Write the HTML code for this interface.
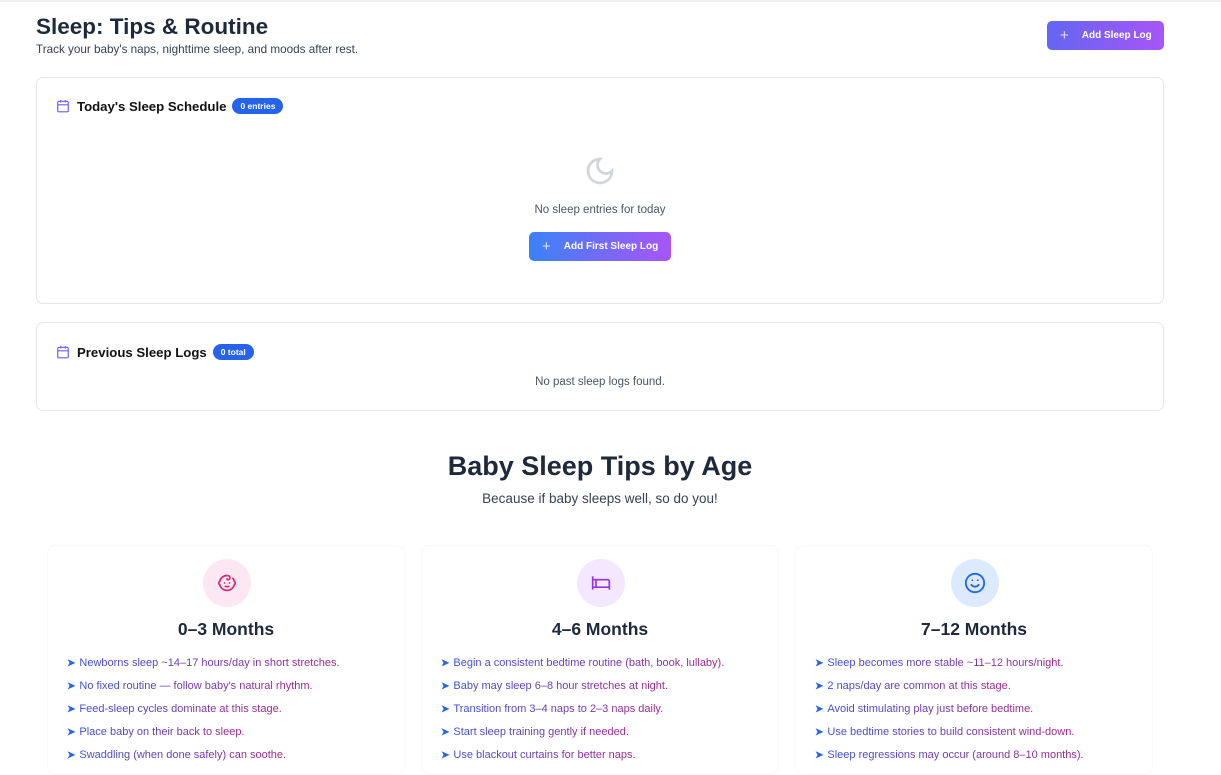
<!DOCTYPE html>
<html><head><meta charset="utf-8"><style>
*{box-sizing:border-box;margin:0;padding:0}
body{width:1221px;height:762px;overflow:hidden;background:#fff;font-family:"Liberation Sans",Arial,sans-serif;color:#1f2937;position:relative}
.topline{position:absolute;left:0;top:0;width:1221px;height:2px;background:#f3eef2}
h1{position:absolute;left:36px;top:14px;font-size:22.5px;font-weight:700;color:#1e293b}
.sub{position:absolute;left:36px;top:43px;font-size:11.7px;color:#374151}
.btn{position:absolute;color:#fff;font-size:10px;font-weight:700;border-radius:5px;display:flex;align-items:center;background:linear-gradient(90deg,#6366f1,#a855f7)}
.card{position:absolute;left:36px;width:1128px;border:1px solid #e5e7eb;border-radius:7px;background:#fff}
.ct{position:absolute;left:19px;display:flex;align-items:center;font-size:13.2px;font-weight:700;color:#111}
.ct svg{margin-right:7px}
.badge{margin-left:6px;background:#2563eb;color:#fff;font-size:8.5px;font-weight:700;border-radius:9px;padding:3px 8px}
.muted{position:absolute;width:100%;text-align:center;font-size:11.5px;color:#4b5563}
.h2{position:absolute;top:451px;left:0;width:1200px;text-align:center;font-size:27px;font-weight:700;color:#1e293b}
.h2s{position:absolute;top:491px;left:0;width:1200px;text-align:center;font-size:13.5px;color:#374151}
.col{position:absolute;top:545px;width:358px;height:230px;border:1px solid #f8f8fa;border-radius:8px}
.circ{position:absolute;top:13px;left:155px;width:48px;height:48px;border-radius:50%;display:flex;align-items:center;justify-content:center}
.ch{position:absolute;top:73px;width:100%;text-align:center;font-size:17.5px;font-weight:700;color:#1e293b}
ul{position:absolute;top:111px;left:19px;list-style:none}
li{font-size:11px;height:23px;display:flex;align-items:flex-start}
li b{color:#2563eb;font-size:10px;margin-right:4px;line-height:13px}
li span{line-height:13px;background:linear-gradient(90deg,#3b4fd8,#a3248a);-webkit-background-clip:text;background-clip:text;color:transparent}
</style></head><body>
<div class="topline"></div>
<h1>Sleep: Tips &amp; Routine</h1>
<div class="sub">Track your baby's naps, nighttime sleep, and moods after rest.</div>
<div class="btn" style="left:1047px;top:21px;width:117px;height:29px;padding-left:13px"><span style="font-size:15px;font-weight:400;margin-right:13px;opacity:.8">+</span>Add Sleep Log</div>

<div class="card" style="top:77px;height:227px">
 <div class="ct" style="top:20px"><svg width="14" height="14" viewBox="0 0 24 24" fill="none" stroke="#6d5cf0" stroke-width="2"><rect x="3" y="4" width="18" height="18" rx="2"/><path d="M16 2v4M8 2v4M3 10h18"/></svg>Today's Sleep Schedule<span class="badge">0 entries</span></div>
 <svg style="position:absolute;left:547px;top:77px" width="32" height="32" viewBox="0 0 24 24" fill="none" stroke="#d1d5db" stroke-width="2" stroke-linecap="round"><path d="M12 3a6 6 0 0 0 9 9 9 9 0 1 1-9-9Z"/></svg>
 <div class="muted" style="top:126px">No sleep entries for today</div>
 <div class="btn" style="left:492px;top:154px;width:142px;height:29px;padding-left:13px;background:linear-gradient(90deg,#3b82f6,#a855f7)"><span style="font-size:15px;font-weight:400;margin-right:13px;opacity:.8">+</span>Add First Sleep Log</div>
</div>

<div class="card" style="top:322px;height:89px">
 <div class="ct" style="top:21px"><svg width="14" height="14" viewBox="0 0 24 24" fill="none" stroke="#6d5cf0" stroke-width="2"><rect x="3" y="4" width="18" height="18" rx="2"/><path d="M16 2v4M8 2v4M3 10h18"/></svg>Previous Sleep Logs<span class="badge">0 total</span></div>
 <div class="muted" style="top:53px">No past sleep logs found.</div>
</div>

<div class="h2">Baby Sleep Tips by Age</div>
<div class="h2s">Because if baby sleeps well, so do you!</div>

<div class="col" style="left:47px">
 <div class="circ" style="background:#fce7f3"><svg width="20" height="20" viewBox="0 0 24 24" fill="none" stroke="#db2777" stroke-width="2" stroke-linecap="round"><path d="M9 12h.01M15 12h.01M10 16c.5.3 1.2.5 2 .5s1.5-.2 2-.5"/><path d="M19 6.3a9 9 0 0 1 1.8 3.9 2 2 0 0 1 0 3.6 9 9 0 0 1-17.6 0 2 2 0 0 1 0-3.6A9 9 0 0 1 12 3c2 0 3.5 1.1 3.5 2.5s-.9 2.5-2 2.5c-.8 0-1.5-.4-1.5-1"/></svg></div>
 <div class="ch">0–3 Months</div>
 <ul><li><b>➤</b><span>Newborns sleep ~14–17 hours/day in short stretches.</span></li><li><b>➤</b><span>No fixed routine — follow baby's natural rhythm.</span></li><li><b>➤</b><span>Feed-sleep cycles dominate at this stage.</span></li><li><b>➤</b><span>Place baby on their back to sleep.</span></li><li><b>➤</b><span>Swaddling (when done safely) can soothe.</span></li></ul>
</div>
<div class="col" style="left:421px">
 <div class="circ" style="background:#f3e8ff"><svg width="20" height="20" viewBox="0 0 24 24" fill="none" stroke="#9333ea" stroke-width="2"><path d="M2 4v16M2 8h18a2 2 0 0 1 2 2v10M2 17h20M6 8v9"/></svg></div>
 <div class="ch">4–6 Months</div>
 <ul><li><b>➤</b><span>Begin a consistent bedtime routine (bath, book, lullaby).</span></li><li><b>➤</b><span>Baby may sleep 6–8 hour stretches at night.</span></li><li><b>➤</b><span>Transition from 3–4 naps to 2–3 naps daily.</span></li><li><b>➤</b><span>Start sleep training gently if needed.</span></li><li><b>➤</b><span>Use blackout curtains for better naps.</span></li></ul>
</div>
<div class="col" style="left:795px">
 <div class="circ" style="background:#dbeafe"><svg width="22" height="22" viewBox="0 0 24 24" fill="none" stroke="#2563eb" stroke-width="2" stroke-linecap="round"><circle cx="12" cy="12" r="10"/><path d="M8 14s1.5 2 4 2 4-2 4-2M9 9h.01M15 9h.01"/></svg></div>
 <div class="ch">7–12 Months</div>
 <ul><li><b>➤</b><span>Sleep becomes more stable ~11–12 hours/night.</span></li><li><b>➤</b><span>2 naps/day are common at this stage.</span></li><li><b>➤</b><span>Avoid stimulating play just before bedtime.</span></li><li><b>➤</b><span>Use bedtime stories to build consistent wind-down.</span></li><li><b>➤</b><span>Sleep regressions may occur (around 8–10 months).</span></li></ul>
</div>
</body></html>
